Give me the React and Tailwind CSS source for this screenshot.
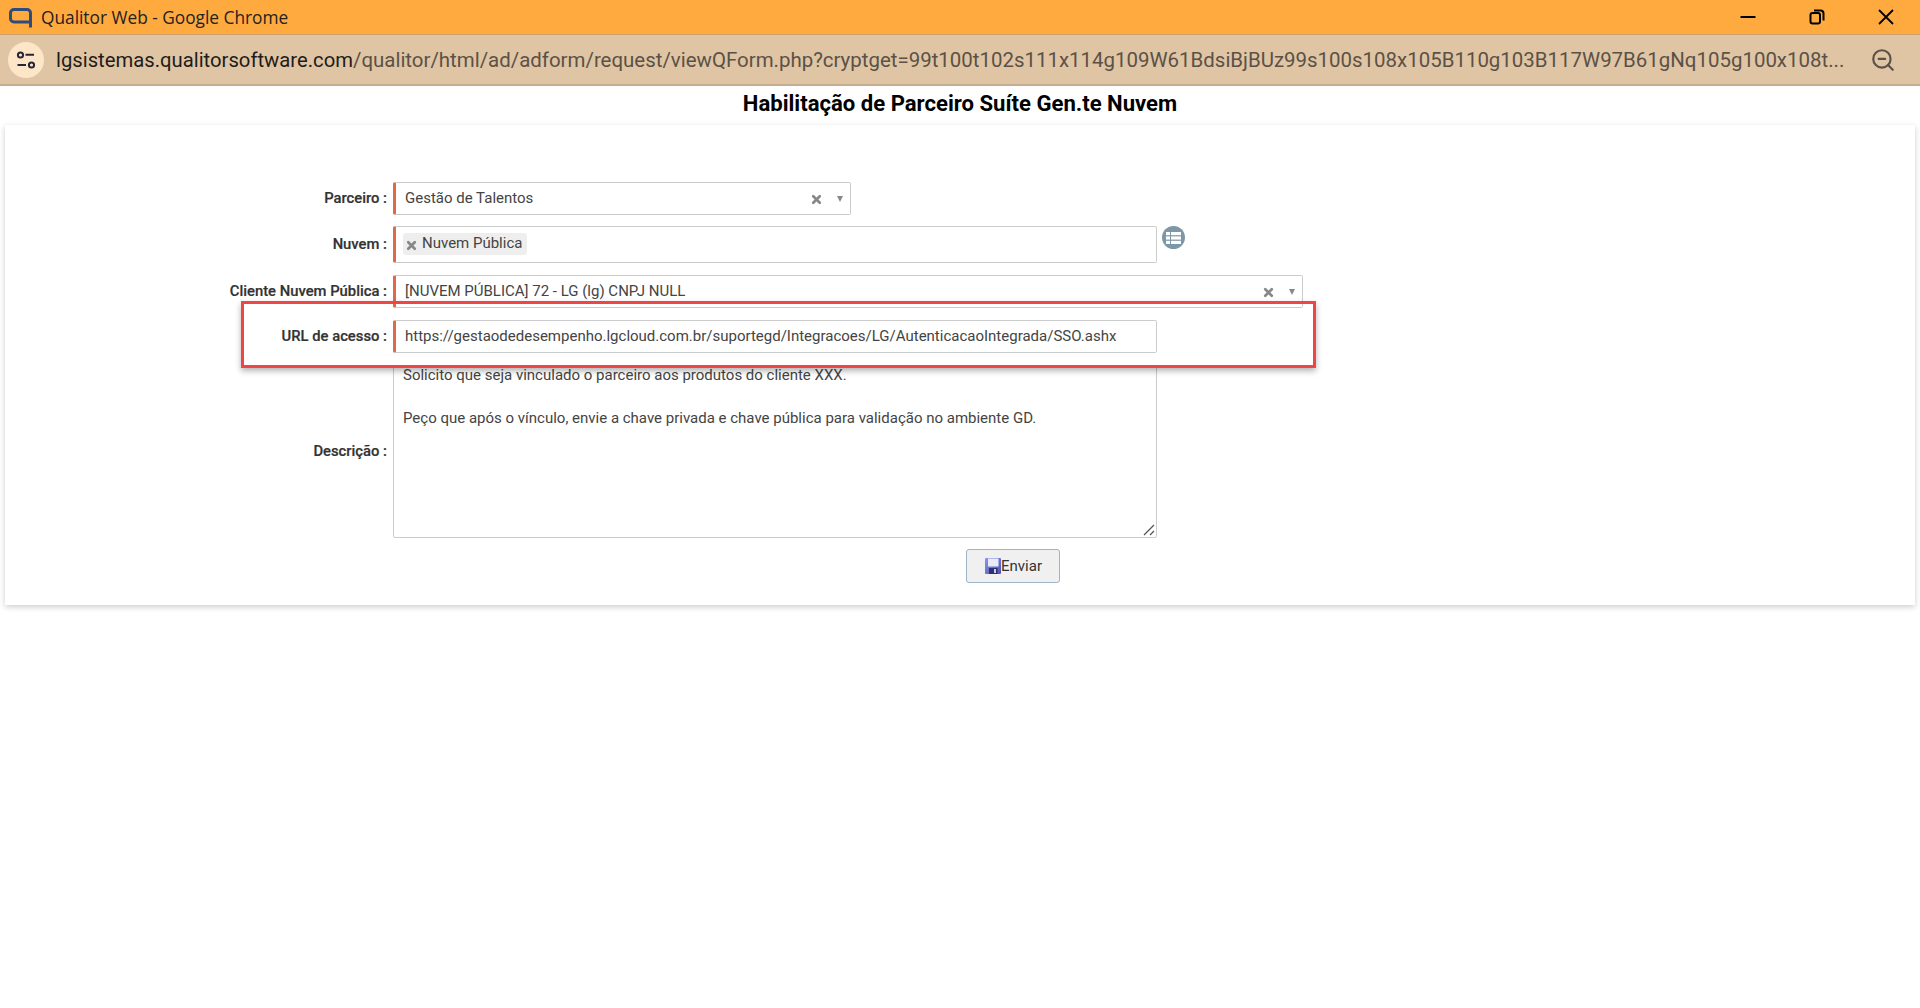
import { X, ZoomOut } from "lucide-react";

const labelCls = "w-[388px] shrink-0 pr-1.5 text-right text-[14.800px] font-medium text-[#333] [-webkit-text-stroke:0.2px_#333]";
const boxCls = "bg-white border border-[#ccc] border-l-[3px] border-l-[#dd6a4a] rounded-[2px] text-[15px] text-[#444]";

function ClearArrow() {
  return (
    <span className="ml-auto flex items-center gap-[14px] pr-[7px] text-[#888]">
      <X size={13} strokeWidth={5} className="mt-[2px]" />
      <span className="w-0 h-0 border-x-[3.5px] border-x-transparent border-t-[6px] border-t-[#888]" />
    </span>
  );
}

function SaveIcon() {
  return (
    <svg width="16" height="16" viewBox="0 0 16 16">
      <defs>
        <linearGradient id="disk" x1="0" y1="0" x2="1" y2="1">
          <stop offset="0" stopColor="#8f96e8" />
          <stop offset="1" stopColor="#4a50b8" />
        </linearGradient>
      </defs>
      <rect x="0" y="0" width="16" height="16" rx="1" fill="url(#disk)" />
      <rect x="3" y="0.5" width="10.500" height="8" fill="#e8ebf6" />
      <rect x="4" y="10" width="8.500" height="6" fill="#2e3170" />
      <rect x="9" y="11" width="2" height="4" fill="#c8cbe8" />
    </svg>
  );
}

export default function App() {
  return (
    <div className="min-h-[1008px] bg-white font-['Roboto',sans-serif] overflow-hidden">
      <div className="h-[35px] bg-[#ffaa3f] border-b border-[#c9a06b] flex items-center pl-[9px]">
        <svg width="24" height="20" viewBox="0 0 24 20" fill="none" className="mt-[1px]">
          <path d="M21.500 19.500V5a3.500 3.500 0 0 0-3.500-3.500H5A3.500 3.500 0 0 0 1.500 5v5.500A3.500 3.500 0 0 0 5 14h16.500" stroke="#2f4a7d" strokeWidth="3" />
        </svg>
        <span className="ml-[8px] mt-[1px] text-[17.300px] text-[#222] font-['Open_Sans',sans-serif]">Qualitor Web - Google Chrome</span>
        <div className="ml-auto flex items-center">
          <span className="w-[69px] flex justify-center">
            <svg width="16" height="16" viewBox="0 0 16 16" stroke="black" strokeWidth="2"><path d="M0.500 8H15.500" /></svg>
          </span>
          <span className="w-[69px] flex justify-center">
            <svg width="16" height="16" viewBox="0 0 16 16" fill="none" stroke="black" strokeWidth="2">
              <rect x="1.500" y="4" width="9.500" height="10.500" rx="2" />
              <path d="M5 1.500h6.500a3 3 0 0 1 3 3v7" />
            </svg>
          </span>
          <span className="w-[69px] flex justify-center">
            <svg width="16" height="16" viewBox="0 0 16 16" stroke="black" strokeWidth="1.800"><path d="M1 1L15 15M15 1L1 15" /></svg>
          </span>
        </div>
      </div>
      <div className="h-[51px] bg-[#dfc5a3] border-b-2 border-[#c4ad90] flex items-center pl-[8px] pr-[24px]">
        <span className="w-[36px] h-[36px] shrink-0 rounded-full bg-[#fde5c8] flex items-center justify-center">
          <svg width="24" height="24" viewBox="0 0 24 24" fill="none" stroke="#26263a" strokeWidth="2">
            <circle cx="6.500" cy="7" r="2.600" />
            <path d="M11.500 6.800h8.500M3.500 17H12" />
            <circle cx="17.500" cy="17" r="2.600" />
          </svg>
        </span>
        <div className="ml-[12px] mt-[1px] whitespace-nowrap text-[20.450px] text-[#5b5148]">
          <span className="text-[20.250px] text-[#1f1c19]">lgsistemas.qualitorsoftware.com</span>
          /qualitor/html/ad/adform/request/viewQForm.php?cryptget=99t100t102s111x114g109W61BdsiBjBUz99s100s108x105B110g103B117W97B61gNq105g100x108t...
        </div>
        <ZoomOut size={26} strokeWidth={2} className="ml-auto mt-[1px] shrink-0 text-[#5b5148]" />
      </div>
      <h1 className="h-[39px] text-center text-[22.100px] leading-[34px] font-bold text-black">Habilitação de Parceiro Suíte Gen.te Nuvem</h1>
      <div className="relative mx-[5px] bg-white pt-[57px] pb-[22px] shadow-[0_2px_6px_rgba(0,0,0,0.2)]">
        <div className="flex items-center h-[33px]">
          <label className={labelCls}>Parceiro :</label>
          <div className={`${boxCls} w-[458px] h-[33px] flex items-center pl-[9px]`}>
            Gestão de Talentos
            <ClearArrow />
          </div>
        </div>
        <div className="mt-[11px] flex items-center h-[37px]">
          <label className={labelCls}>Nuvem :</label>
          <div className={`${boxCls} w-[764px] h-[37px] pl-[7px] pt-[6px]`}>
            <span className="inline-flex items-center gap-[4px] h-[22px] pl-[2px] pr-[5px] pb-[2px] rounded-[3px] bg-[#eee]">
              <X size={13} strokeWidth={5} className="text-[#888] mt-[4px]" />
              Nuvem Pública
            </span>
          </div>
          <span className="ml-[5px] self-start w-[23px] h-[23px] rounded-full bg-[#7d97a6] flex items-center justify-center">
            <svg width="15" height="12" viewBox="0 0 15 12" fill="white">
              <rect x="0" y="0" width="4" height="3.200" />
              <rect x="5" y="0" width="10" height="3.200" />
              <rect x="0" y="4.400" width="4" height="3.200" />
              <rect x="5" y="4.400" width="10" height="3.200" />
              <rect x="0" y="8.800" width="4" height="3.200" />
              <rect x="5" y="8.800" width="10" height="3.200" />
            </svg>
          </span>
        </div>
        <div className="mt-[12px] flex items-center h-[33px]">
          <label className={labelCls}>Cliente Nuvem Pública :</label>
          <div className={`${boxCls} w-[910px] h-[33px] flex items-center pl-[9px]`}>
            [NUVEM PÚBLICA] 72 - LG (lg) CNPJ NULL
            <ClearArrow />
          </div>
        </div>
        <div className="mt-[12px] flex items-center h-[33px]">
          <label className={labelCls}>URL de acesso :</label>
          <div className={`${boxCls} w-[764px] h-[33px] flex items-center pl-[9px]`}>
            https://gestaodedesempenho.lgcloud.com.br/suportegd/Integracoes/LG/AutenticacaoIntegrada/SSO.ashx
          </div>
        </div>
        <div className="mt-[12px] flex items-center h-[173px]">
          <label className={labelCls}>Descrição :</label>
          <div className="relative w-[764px] h-[173px] bg-white border border-[#ccc] rounded-[2px] pl-[9px] text-[15px] leading-[21px] text-[#444]">
            <p className="-mt-[1px]">Solicito que seja vinculado o parceiro aos produtos do cliente XXX.</p>
            <p className="mt-[22px]">Peço que após o vínculo, envie a chave privada e chave pública para validação no ambiente GD.</p>
            <svg className="absolute right-[1px] bottom-[1px]" width="12" height="12" viewBox="0 0 12 12" stroke="#555" strokeWidth="1.300">
              <path d="M1 11L11 1M7 11L11 7" />
            </svg>
          </div>
        </div>
        <div className="mt-[11px] flex justify-center pl-[105px]">
          <button className="w-[94px] h-[34px] flex items-center justify-center bg-[#f0f0f0] border border-[#a0b3c2] rounded-[3px] text-[15px] text-[#333] pl-[2px]">
            <SaveIcon />
            Enviar
          </button>
        </div>
        <div className="absolute left-[236px] top-[176px] w-[1075px] h-[67px] border-[3px] border-[#f04545] shadow-[0_3px_6px_rgba(0,0,0,0.3)]" />
      </div>
    </div>
  );
}
